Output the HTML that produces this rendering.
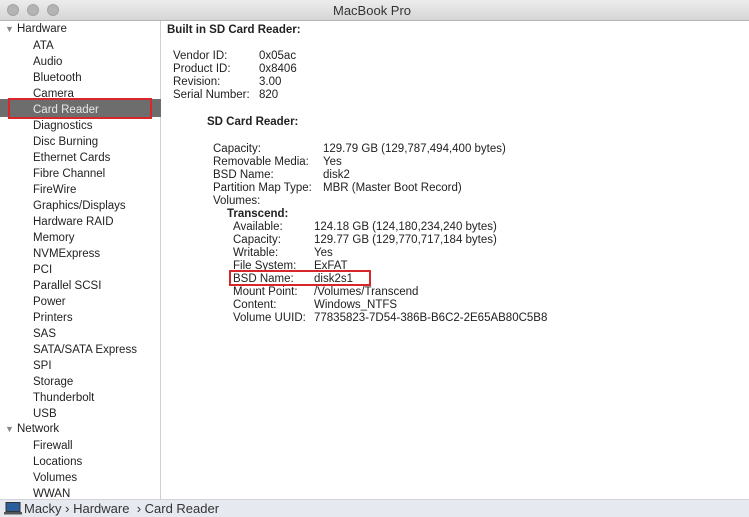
<!DOCTYPE html><html><head><style>
*{margin:0;padding:0;box-sizing:border-box}
body{width:749px;height:517px;overflow:hidden;background:#fff;font-family:"Liberation Sans",sans-serif;font-size:11.5px;color:#222;position:relative}
.t{position:absolute;white-space:nowrap;line-height:13px}
.title{position:absolute;left:0;top:0;width:749px;height:21px;background:linear-gradient(#ececec,#d6d6d6);border-bottom:1px solid #b5b5b5}
.dot{position:absolute;top:4px;width:12px;height:12px;border-radius:50%;background:#b4b4b4;border:1px solid #a4a4a4}
.side{position:absolute;left:0;top:21px;width:161px;height:478px;border-right:1px solid #d0d0d0;background:#fff}
.sel{position:absolute;left:0;top:99px;width:161px;height:18px;background:#6d6d6d}
.red{position:absolute;border:2px solid #d8262b}
.status{position:absolute;left:0;top:499px;width:749px;height:18px;background:#e6eaf0;border-top:1px solid #d0d4da}
.b{font-weight:bold}
</style></head><body>
<div class="title"></div>
<div class="dot" style="left:7px"></div><div class="dot" style="left:27px"></div><div class="dot" style="left:47px"></div>
<div class="t" style="left:333px;top:4px;font-size:13px;color:#333">MacBook Pro</div>
<div class="side"></div>
<div class="sel"></div>
<div class="red" style="left:8px;top:98px;width:144px;height:21px"></div>
<div class="t" style="left:5px;top:23px;color:#888;font-size:9px">▼</div>
<div class="t" style="left:17px;top:23px">Hardware</div>
<div style="position:absolute;left:33px;top:38px;line-height:16px">
ATA<br>Audio<br>Bluetooth<br>Camera<br><span style="color:#e8e8e8">Card Reader</span><br>Diagnostics<br>Disc Burning<br>Ethernet Cards<br>Fibre Channel<br>FireWire<br>Graphics/Displays<br>Hardware RAID<br>Memory<br>NVMExpress<br>PCI<br>Parallel SCSI<br>Power<br>Printers<br>SAS<br>SATA/SATA Express<br>SPI<br>Storage<br>Thunderbolt<br>USB</div>
<div class="t" style="left:5px;top:423px;color:#888;font-size:9px">▼</div>
<div class="t" style="left:17px;top:423px">Network</div>
<div style="position:absolute;left:33px;top:438px;line-height:16px">Firewall<br>Locations<br>Volumes<br>WWAN</div>
<div class="t b" style="left:167px;top:24px">Built in SD Card Reader:</div>
<div class="t" style="left:173px;top:50px">Vendor ID:<br>Product ID:<br>Revision:<br>Serial Number:</div>
<div class="t" style="left:259px;top:50px">0x05ac<br>0x8406<br>3.00<br>820</div>
<div class="t b" style="left:207px;top:116px">SD Card Reader:</div>
<div class="t" style="left:213px;top:143px">Capacity:<br>Removable Media:<br>BSD Name:<br>Partition Map Type:<br>Volumes:</div>
<div class="t" style="left:323px;top:143px">129.79 GB (129,787,494,400 bytes)<br>Yes<br>disk2<br>MBR (Master Boot Record)</div>
<div class="t b" style="left:227px;top:208px">Transcend:</div>
<div class="t" style="left:233px;top:221px">Available:<br>Capacity:<br>Writable:<br>File System:<br>BSD Name:<br>Mount Point:<br>Content:<br>Volume UUID:</div>
<div class="t" style="left:314px;top:221px">124.18 GB (124,180,234,240 bytes)<br>129.77 GB (129,770,717,184 bytes)<br>Yes<br>ExFAT<br>disk2s1<br>/Volumes/Transcend<br>Windows_NTFS<br>77835823-7D54-386B-B6C2-2E65AB80C5B8</div>
<div class="red" style="left:229px;top:270px;width:142px;height:16px"></div>
<div class="status"></div>
<svg style="position:absolute;left:4px;top:502px" width="18" height="13" viewBox="0 0 18 13"><rect x="2" y="0.5" width="14" height="9" fill="#2a5d9c" stroke="#333"/><rect x="0" y="10" width="18" height="2.5" fill="#555"/></svg>
<div class="t" style="left:24px;top:502px;font-size:13px;color:#333">Macky › Hardware &nbsp;› Card Reader</div>
</body></html>
